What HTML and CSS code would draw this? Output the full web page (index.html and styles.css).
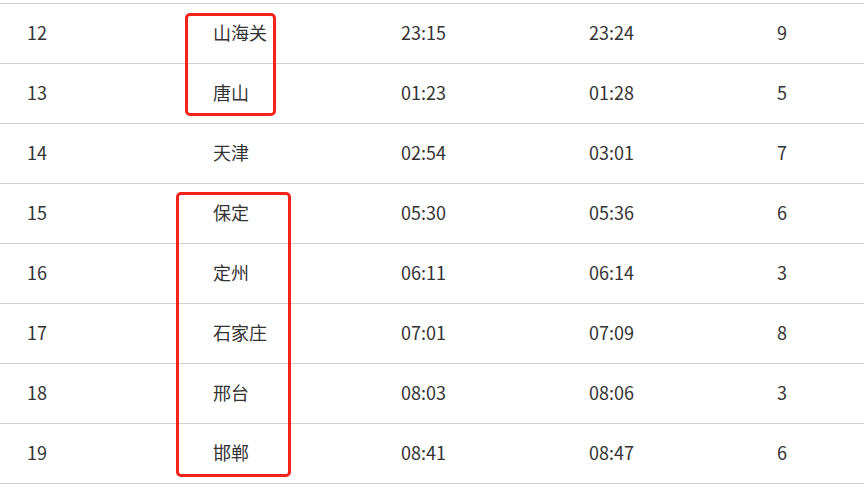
FILE: index.html
```html
<!DOCTYPE html>
<html lang="zh-CN">
<head>
<meta charset="utf-8">
<link rel="stylesheet" href="styles.css">
</head>
<body>
<div class="table">
  <div class="row"><span class="c1">12</span><span class="c2">山海关</span><span class="c3">23:15</span><span class="c4">23:24</span><span class="c5">9</span></div>
  <div class="row"><span class="c1">13</span><span class="c2">唐山</span><span class="c3">01:23</span><span class="c4">01:28</span><span class="c5">5</span></div>
  <div class="row"><span class="c1">14</span><span class="c2">天津</span><span class="c3">02:54</span><span class="c4">03:01</span><span class="c5">7</span></div>
  <div class="row"><span class="c1">15</span><span class="c2">保定</span><span class="c3">05:30</span><span class="c4">05:36</span><span class="c5">6</span></div>
  <div class="row"><span class="c1">16</span><span class="c2">定州</span><span class="c3">06:11</span><span class="c4">06:14</span><span class="c5">3</span></div>
  <div class="row"><span class="c1">17</span><span class="c2">石家庄</span><span class="c3">07:01</span><span class="c4">07:09</span><span class="c5">8</span></div>
  <div class="row"><span class="c1">18</span><span class="c2">邢台</span><span class="c3">08:03</span><span class="c4">08:06</span><span class="c5">3</span></div>
  <div class="row"><span class="c1">19</span><span class="c2">邯郸</span><span class="c3">08:41</span><span class="c4">08:47</span><span class="c5">6</span></div>
  <div class="mark mark-a"></div>
  <div class="mark mark-b"></div>
</div>
</body>
</html>
```
FILE: styles.css
```css
html, body {
  margin: 0;
  padding: 0;
  background: #fff;
}
body {
  width: 864px;
  height: 488px;
  overflow: hidden;
  font-family: "Noto Sans CJK SC", "Noto Sans", sans-serif;
  font-size: 18px;
  color: #333;
}
.table {
  position: relative;
  margin-top: 3px;
  border-top: 1px solid #d2d2d2;
}
.row {
  display: grid;
  grid-template-columns: 186px 188px 188px 188px 1fr;
  padding-left: 27px;
  height: 59px;
  align-items: center;
  border-bottom: 1px solid #d2d2d2;
  line-height: 1;
}
.row span {
  white-space: nowrap;
  padding-bottom: 3px;
}
.mark {
  position: absolute;
  border: 3px solid #f5221b;
  border-radius: 5px;
  box-sizing: border-box;
}
.mark-a {
  left: 185px;
  top: 9px;
  width: 91px;
  height: 103px;
}
.mark-b {
  left: 176px;
  top: 188px;
  width: 115px;
  height: 285px;
}
```
